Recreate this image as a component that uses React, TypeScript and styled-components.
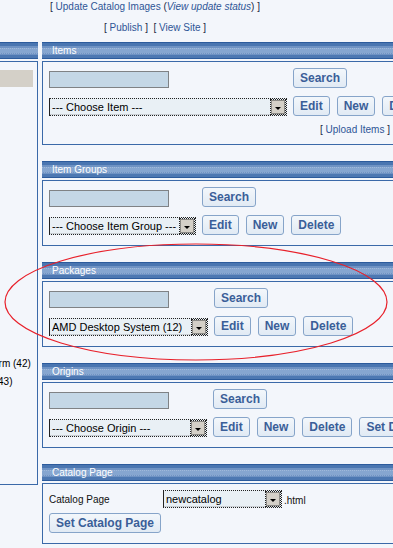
import React from "react";
import styled, { createGlobalStyle } from "styled-components";

const Global = createGlobalStyle`
  html, body { margin: 0; padding: 0; background: #f3f6fb; overflow: hidden; }
  body { font-family: "Liberation Sans", Arial, sans-serif; font-size: 10px; color: #000; }
`;

const Page = styled.div`
  position: relative;
  width: 393px;
  height: 548px;
  overflow: hidden;
`;

const TopLinks = styled.div`
  display: flex;
  flex-direction: column;
  gap: 9px;
  padding-top: 1px;
  height: 42px;
  box-sizing: border-box;
`;

const LinkLine = styled.div<{ $indent: number }>`
  padding-left: ${(p) => p.$indent}px;
  line-height: 12px;
  white-space: nowrap;
  color: #1c2a44;
`;

const Link = styled.a`
  color: #2e5596;
  text-decoration: none;
`;

const Em = styled.i`
  color: #2e5596;
`;

const Columns = styled.div`
  display: flex;
  gap: 4px;
  margin-left: -162px;
`;

const LeftColumn = styled.div`
  width: 200px;
  flex: none;
`;

const MainColumn = styled.div`
  width: 362px;
  flex: none;
`;

const HeaderBar = styled.div`
  height: 17px;
  box-sizing: border-box;
  border-top: 1px solid #2c5b9c;
  border-bottom: 1px solid #2c5b9c;
  background:
    repeating-linear-gradient(
      to right,
      rgba(255, 255, 255, 0.22) 0 1px,
      transparent 1px 2px
    ) 0 5px / 100% 1px no-repeat,
    repeating-linear-gradient(
      to right,
      rgba(255, 255, 255, 0.22) 0 1px,
      transparent 1px 2px
    ) 0 10px / 100% 1px no-repeat,
    linear-gradient(
      to bottom,
      #4a76b1 0 3px,
      #6f93c4 3px 5px,
      #86a6d0 5px 10px,
      #6f93c4 10px 12px,
      #4d78b2 12px 15px
    );
  color: #fff;
  padding-left: 10px;
  line-height: 15px;
  white-space: nowrap;
  margin-bottom: 2px;
`;

const Box = styled.div<{ $bottom?: number }>`
  border: 1px solid #3a69a8;
  padding: 6px 6px ${(p) => p.$bottom ?? 10}px 6px;
  margin-bottom: 16px;
`;

const LeftBox = styled.div`
  border: 1px solid #3a69a8;
  height: 424px;
  box-sizing: border-box;
  padding: 8px 4px 0 0;
  display: flex;
  flex-direction: column;
`;

const GrayBar = styled.div`
  height: 17px;
  background: #d4d0c8;
`;

const LeftList = styled.div`
  margin-top: 271px;
  padding-left: 134px;
  display: flex;
  flex-direction: column;
  gap: 6px;
  line-height: 12px;
  white-space: nowrap;
`;

const FormGrid = styled.div`
  display: grid;
  grid-template-columns: auto auto;
  column-gap: 6px;
  row-gap: 8px;
  align-items: end;
  justify-content: start;
`;

const ButtonRow = styled.div`
  display: flex;
  gap: 7px;
  white-space: nowrap;
`;

const TextBox = styled.div`
  width: 120px;
  height: 17px;
  box-sizing: border-box;
  background: #c4d7e6;
  border: 1px solid #7f8285;
`;

const Button = styled.button`
  height: 20px;
  box-sizing: border-box;
  padding: 0 6px;
  font-family: "Liberation Sans", Arial, sans-serif;
  font-weight: bold;
  font-size: 12px;
  color: #3a5e98;
  background: linear-gradient(to bottom, #f3f7fb, #e1eaf4);
  border: 1px solid #86a4c9;
  border-radius: 3px;
  flex: none;
  white-space: nowrap;
  line-height: 16px;
`;

const SelectBox = styled.div<{ $width: number }>`
  width: ${(p) => p.$width}px;
  height: 18px;
  box-sizing: border-box;
  border: 1px dotted #222;
  border-left-style: solid;
  background: #e9f0f5;
  display: flex;
  align-items: center;
  padding-left: 2px;
  box-shadow: inset 0 -1px 0 #c9ced3;
`;

const SelectText = styled.span`
  flex: 1;
  font-size: 11px;
  white-space: nowrap;
  overflow: hidden;
  color: #000;
`;

const Arrow = styled.span`
  width: 14px;
  height: 14px;
  margin-right: 1px;
  box-sizing: border-box;
  background: #d4d0c8;
  border: 1px solid #8b8a86;
  outline: 1px dotted #222;
  display: flex;
  align-items: center;
  justify-content: center;
  flex: none;
  &::after {
    content: "";
    border-left: 3px solid transparent;
    border-right: 3px solid transparent;
    border-top: 3px solid #000;
    margin-top: 2px;
  }
`;

const Upload = styled.div`
  text-align: right;
  margin-top: 8px;
  margin-right: 7px;
  line-height: 12px;
  white-space: nowrap;
  color: #1c2a44;
`;

const CatalogRow = styled.div`
  display: flex;
  align-items: center;
`;

const Label = styled.span`
  width: 114px;
  flex: none;
  color: #111;
`;

const Suffix = styled.span`
  margin-left: 2px;
  margin-top: 3px;
  color: #111;
`;

const CatalogButton = styled(Button)`
  margin-top: 5px;
`;

const Overlay = styled.svg`
  position: absolute;
  top: 0;
  left: 0;
  pointer-events: none;
`;

type SectionProps = {
  title: string;
  select: string;
  width: number;
  buttons: string[];
  bottom?: number;
  children?: React.ReactNode;
};

const Select = ({ text, width }: { text: string; width: number }) => (
  <SelectBox $width={width}>
    <SelectText>{text}</SelectText>
    <Arrow />
  </SelectBox>
);

const Section = ({ title, select, width, buttons, bottom, children }: SectionProps) => (
  <>
    <HeaderBar>{title}</HeaderBar>
    <Box $bottom={bottom}>
      <FormGrid>
        <TextBox />
        <ButtonRow>
          <Button>Search</Button>
        </ButtonRow>
        <Select text={select} width={width} />
        <ButtonRow>
          {buttons.map((b) => (
            <Button key={b}>{b}</Button>
          ))}
        </ButtonRow>
      </FormGrid>
      {children}
    </Box>
  </>
);

export default function App() {
  return (
    <Page>
      <Global />
      <TopLinks>
        <LinkLine $indent={50}>
          [ <Link href="#">Update Catalog Images</Link> (<Em>View update status</Em>) ]
        </LinkLine>
        <LinkLine $indent={104}>
          [ <Link href="#">Publish</Link> ]&nbsp; [ <Link href="#">View Site</Link> ]
        </LinkLine>
      </TopLinks>
      <Columns>
        <LeftColumn>
          <HeaderBar />
          <LeftBox>
            <GrayBar />
            <LeftList>
              <div>Platform (42)</div>
              <div>Intel (43)</div>
            </LeftList>
          </LeftBox>
        </LeftColumn>
        <MainColumn>
          <Section
            title="Items"
            select="--- Choose Item ---"
            width={238}
            buttons={["Edit", "New", "Delete"]}
            bottom={8}
          >
            <Upload>
              [ <Link href="#">Upload Items</Link> ]
            </Upload>
          </Section>
          <Section
            title="Item Groups"
            select="--- Choose Item Group ---"
            width={147}
            buttons={["Edit", "New", "Delete"]}
          />
          <Section
            title="Packages"
            select="AMD Desktop System (12)"
            width={159}
            buttons={["Edit", "New", "Delete"]}
          />
          <Section
            title="Origins"
            select="--- Choose Origin ---"
            width={158}
            buttons={["Edit", "New", "Delete", "Set Default"]}
          />
          <HeaderBar>Catalog Page</HeaderBar>
          <Box>
            <CatalogRow>
              <Label>Catalog Page</Label>
              <Select text="newcatalog" width={119} />
              <Suffix>.html</Suffix>
            </CatalogRow>
            <CatalogButton>Set Catalog Page</CatalogButton>
          </Box>
        </MainColumn>
      </Columns>
      <Overlay width="393" height="548" viewBox="0 0 393 548">
        <ellipse cx="196" cy="302" rx="191" ry="58" fill="none" stroke="#e8202a" strokeWidth="1.2" />
      </Overlay>
    </Page>
  );
}
